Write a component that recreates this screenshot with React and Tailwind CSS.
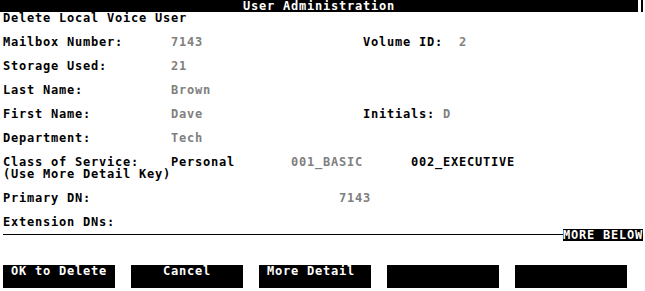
const mono = "font-['DejaVu_Sans_Mono',monospace] font-bold text-[12px] leading-[12px] tracking-[0.776px]"

function Row({ children, className = '' }) {
  return <div className={`flex h-[12px] items-center pl-[3px] whitespace-pre ${className}`}>{children}</div>
}

const Gap = () => <div className="h-[12px]" />

export default function App() {
  const grey = 'text-[#808080]'
  return (
    <div className={`w-[645px] h-[291px] bg-white text-black overflow-hidden ${mono}`}>
      {/* title bar */}
      <div className="flex h-[12px]">
        <div className="w-[638px] bg-black text-white text-center">User Administration</div>
        <div className="w-[3px]" />
        <div className="w-[2px] bg-black" />
      </div>
      <Row>Delete Local Voice User</Row>
      <Gap />
      <Row>
        <span className="w-[168px]">Mailbox Number:</span>
        <span className={`w-[192px] ${grey}`}>7143</span>
        <span className="w-[96px]">Volume ID:</span>
        <span className={grey}>2</span>
      </Row>
      <Gap />
      <Row>
        <span className="w-[168px]">Storage Used:</span>
        <span className={grey}>21</span>
      </Row>
      <Gap />
      <Row>
        <span className="w-[168px]">Last Name:</span>
        <span className={grey}>Brown</span>
      </Row>
      <Gap />
      <Row>
        <span className="w-[168px]">First Name:</span>
        <span className={`w-[192px] ${grey}`}>Dave</span>
        <span className="w-[80px]">Initials:</span>
        <span className={grey}>D</span>
      </Row>
      <Gap />
      <Row>
        <span className="w-[168px]">Department:</span>
        <span className={grey}>Tech</span>
      </Row>
      <Gap />
      <Row>
        <span className="w-[168px]">Class of Service:</span>
        <span className="w-[120px]">Personal</span>
        <span className={`w-[120px] ${grey}`}>001_BASIC</span>
        <span>002_EXECUTIVE</span>
      </Row>
      <Row>(Use More Detail Key)</Row>
      <Gap />
      <Row>
        <span className="w-[336px]">Primary DN:</span>
        <span className={grey}>7143</span>
      </Row>
      <Gap />
      <Row>Extension DNs:</Row>
      <div className="flex h-[12px] items-center pl-[3px] pr-[2px]">
        <div className="flex-1 h-px bg-black" />
        <div className="w-[80px] h-[12px] bg-black text-white whitespace-pre mt-[2px]">MORE BELOW</div>
      </div>

      <div className="flex gap-[16px] pl-[3px] mt-[25px]">
        <div className="w-[112px] h-[23px] bg-black text-white pl-[8px] whitespace-pre">OK to Delete</div>
        <div className="w-[112px] h-[23px] bg-black text-white pl-[32px] whitespace-pre">Cancel</div>
        <div className="w-[112px] h-[23px] bg-black text-white pl-[8px] whitespace-pre">More Detail</div>
        <div className="w-[112px] h-[23px] bg-black" />
        <div className="w-[112px] h-[23px] bg-black" />
      </div>
    </div>
  )
}
